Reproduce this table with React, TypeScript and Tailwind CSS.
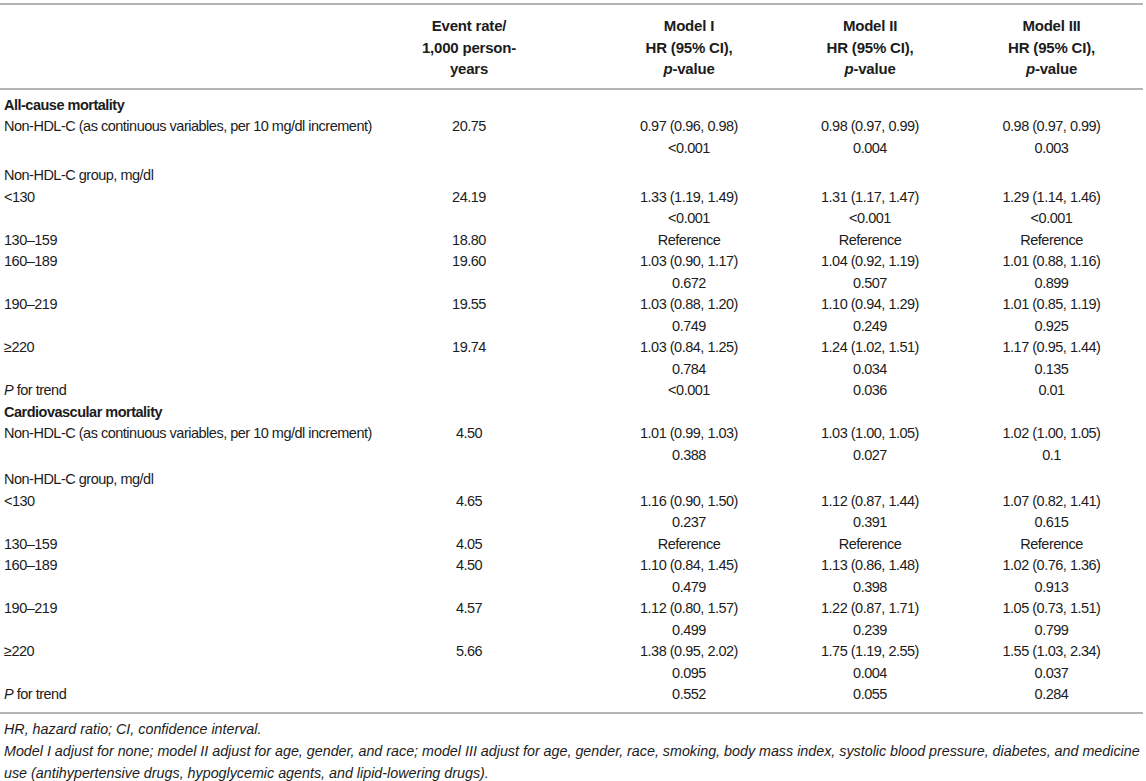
import React from 'react';

type Row = {
  label: React.ReactNode;
  rate?: string;
  m1?: string[];
  m2?: string[];
  m3?: string[];
  bold?: boolean;
  extra?: string;
};

const allCause: Row[] = [
  { label: 'All-cause mortality', bold: true },
  {
    label: 'Non-HDL-C (as continuous variables, per 10 mg/dl increment)',
    rate: '20.75',
    m1: ['0.97 (0.96, 0.98)', '<0.001'],
    m2: ['0.98 (0.97, 0.99)', '0.004'],
    m3: ['0.98 (0.97, 0.99)', '0.003'],
    extra: 'pb-[6px]',
  },
  { label: 'Non-HDL-C group, mg/dl' },
  { label: '<130', rate: '24.19', m1: ['1.33 (1.19, 1.49)', '<0.001'], m2: ['1.31 (1.17, 1.47)', '<0.001'], m3: ['1.29 (1.14, 1.46)', '<0.001'] },
  { label: '130–159', rate: '18.80', m1: ['Reference'], m2: ['Reference'], m3: ['Reference'] },
  { label: '160–189', rate: '19.60', m1: ['1.03 (0.90, 1.17)', '0.672'], m2: ['1.04 (0.92, 1.19)', '0.507'], m3: ['1.01 (0.88, 1.16)', '0.899'] },
  { label: '190–219', rate: '19.55', m1: ['1.03 (0.88, 1.20)', '0.749'], m2: ['1.10 (0.94, 1.29)', '0.249'], m3: ['1.01 (0.85, 1.19)', '0.925'] },
  { label: '≥220', rate: '19.74', m1: ['1.03 (0.84, 1.25)', '0.784'], m2: ['1.24 (1.02, 1.51)', '0.034'], m3: ['1.17 (0.95, 1.44)', '0.135'] },
  { label: <><i>P</i> for trend</>, m1: ['<0.001'], m2: ['0.036'], m3: ['0.01'] },
];

const cardio: Row[] = [
  { label: 'Cardiovascular mortality', bold: true },
  {
    label: 'Non-HDL-C (as continuous variables, per 10 mg/dl increment)',
    rate: '4.50',
    m1: ['1.01 (0.99, 1.03)', '0.388'],
    m2: ['1.03 (1.00, 1.05)', '0.027'],
    m3: ['1.02 (1.00, 1.05)', '0.1'],
    extra: 'pb-[3px]',
  },
  { label: 'Non-HDL-C group, mg/dl' },
  { label: '<130', rate: '4.65', m1: ['1.16 (0.90, 1.50)', '0.237'], m2: ['1.12 (0.87, 1.44)', '0.391'], m3: ['1.07 (0.82, 1.41)', '0.615'] },
  { label: '130–159', rate: '4.05', m1: ['Reference'], m2: ['Reference'], m3: ['Reference'] },
  { label: '160–189', rate: '4.50', m1: ['1.10 (0.84, 1.45)', '0.479'], m2: ['1.13 (0.86, 1.48)', '0.398'], m3: ['1.02 (0.76, 1.36)', '0.913'] },
  { label: '190–219', rate: '4.57', m1: ['1.12 (0.80, 1.57)', '0.499'], m2: ['1.22 (0.87, 1.71)', '0.239'], m3: ['1.05 (0.73, 1.51)', '0.799'] },
  { label: '≥220', rate: '5.66', m1: ['1.38 (0.95, 2.02)', '0.095'], m2: ['1.75 (1.19, 2.55)', '0.004'], m3: ['1.55 (1.03, 2.34)', '0.037'] },
  { label: <><i>P</i> for trend</>, m1: ['0.552'], m2: ['0.055'], m3: ['0.284'] },
];

const cols = 'grid grid-cols-[400px_138px_242px_180px_183px]';

function Cell({ lines, className = '' }: { lines?: string[]; className?: string }) {
  return (
    <div className={`text-center ${className}`}>
      {lines?.map((l, i) => (
        <div key={i}>{l}</div>
      ))}
    </div>
  );
}

function TableRow({ row }: { row: Row }) {
  return (
    <div className={`${cols} ${row.extra ?? ''}`}>
      <div className={`pl-[4px] whitespace-nowrap ${row.bold ? 'font-bold' : ''}`}>{row.label}</div>
      <Cell lines={row.rate ? [row.rate] : undefined} />
      <Cell lines={row.m1} className="pl-[60px]" />
      <Cell lines={row.m2} />
      <Cell lines={row.m3} />
    </div>
  );
}

function HeadCell({ top }: { top: string }) {
  return (
    <div className="text-center">
      <div>{top}</div>
      <div>HR (95% CI),</div>
      <div>
        <i>p</i>-value
      </div>
    </div>
  );
}

export default function App() {
  return (
    <div className="w-[1146px] h-[781px] bg-white text-[#1c1c1c] text-[14.5px] tracking-[-0.5px] leading-[21.5px] font-['Liberation_Sans',Arial,sans-serif] overflow-hidden">
      <div className="w-[1143px] pt-[3px]">
        <div className="border-t-2 border-[#b4b4b4]" />
        <div className={`${cols} pt-[10px] pb-[8px] font-bold text-[15px] tracking-[-0.2px]`}>
          <div />
          <div className="text-center">
            <div>Event rate/</div>
            <div>1,000 person-</div>
            <div>years</div>
          </div>
          <div className="pl-[60px]">
            <HeadCell top="Model I" />
          </div>
          <HeadCell top="Model II" />
          <HeadCell top="Model III" />
        </div>
        <div className="border-t-2 border-[#b4b4b4]" />
        <div className="pt-[5px] pb-[6px]">
          {allCause.map((r, i) => (
            <TableRow key={'a' + i} row={r} />
          ))}
          {cardio.map((r, i) => (
            <TableRow key={'c' + i} row={r} />
          ))}
        </div>
        <div className="border-t-2 border-[#b4b4b4]" />
        <div className="pl-[4px] pt-[4px] italic text-[14.3px] tracking-normal leading-[22px]">
          <div>HR, hazard ratio; CI, confidence interval.</div>
          <div className="whitespace-nowrap">
            Model I adjust for none; model II adjust for age, gender, and race; model III adjust for age, gender, race, smoking, body mass index, systolic blood pressure, diabetes, and medicine
            <br />
            use (antihypertensive drugs, hypoglycemic agents, and lipid-lowering drugs).
          </div>
        </div>
      </div>
    </div>
  );
}
